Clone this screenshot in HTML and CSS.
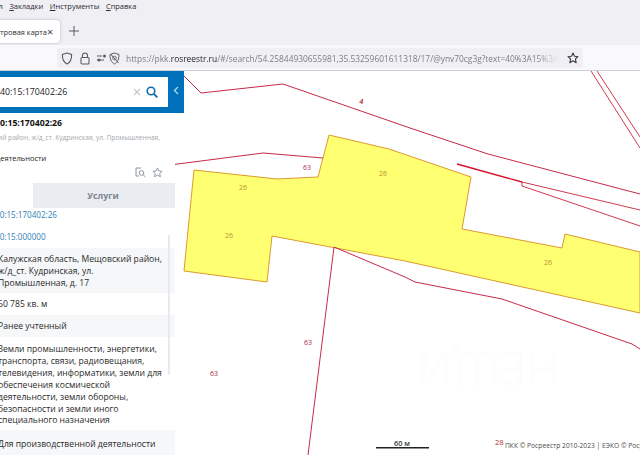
FILE: index.html
```html
<!DOCTYPE html>
<html lang="ru">
<head>
<meta charset="utf-8">
<title>Публичная кадастровая карта</title>
<link rel="stylesheet" href="styles.css">
</head>
<body>
<header class="chrome">
  <nav class="menubar">
    <span class="menu-stub">Журнал</span>
    <span class="menu-item"><u>З</u>акладки</span>
    <span class="menu-item"><u>И</u>нструменты</span>
    <span class="menu-item"><u>С</u>правка</span>
  </nav>
  <div class="tabbar">
    <div class="tab"><span class="tab-title">тровая карта</span><span class="tab-close">×</span></div>
    <svg class="tab-new" width="12" height="12" viewBox="0 0 12 12"><path d="M6 1v10M1 6h10" stroke="#5b5b66" stroke-width="1" fill="none"/></svg>
  </div>
  <div class="toolbar">
    <div class="urlbar">
      <svg class="ic-shield" width="12" height="13" viewBox="0 0 12 13"><path d="M6 1 10.6 2.4C10.8 7 9.6 10 6 12 2.400 10 1.200 7 1.400 2.400Z" fill="none" stroke="#5b5b66" stroke-width="1.100"/></svg>
      <svg class="ic-lock" width="10" height="13" viewBox="0 0 10 13"><path d="M2.500 5.500V3.500a2.500 2.500 0 0 1 5 0v2" fill="none" stroke="#5b5b66" stroke-width="1.100"/><rect x="1" y="5.500" width="8" height="6.500" rx="1" fill="none" stroke="#5b5b66" stroke-width="1.100"/></svg>
      <svg class="ic-perm" width="10" height="8" viewBox="0 0 10 8"><path d="M0 2h5M0 6h7" stroke="#5b5b66" stroke-width="1.200"/><circle cx="7.500" cy="2" r="1.500" fill="#5b5b66"/><circle cx="2" cy="6" r="1.500" fill="#5b5b66"/></svg>
      <svg class="ic-track" width="11" height="13" viewBox="0 0 11 13"><path d="M5.500 1 10 2.500C10 7 9 10 5.500 12 2 10 1 7 1 2.500Z" fill="none" stroke="#5b5b66" stroke-width="1"/><path d="M1.500 2 9.500 11" stroke="#5b5b66" stroke-width="1"/><circle cx="5.500" cy="6" r="1.800" fill="none" stroke="#5b5b66" stroke-width=".8"/></svg>
      <span class="url"><span class="url-dim">https://pkk.</span><span class="url-host">rosreestr.ru</span><span class="url-dim">/#/search/54.25844930655981,35.53259601611318/17/@ynv70cg3g?text=40%3A15%3A170402%3A26</span></span>
      <svg class="ic-star" width="12" height="12" viewBox="0 0 12 12"><path d="M6 1 7.500 4.300 11 4.700 8.400 7 9.200 10.700 6 8.800 2.800 10.700 3.600 7 1 4.700 4.500 4.300Z" fill="none" stroke="#3d3d46" stroke-width="1.100" stroke-linejoin="round"/></svg>
    </div>
  </div>
</header>

<main class="stage">
  <svg class="map" viewBox="0 71 640 384" width="640" height="384">
    <polygon class="parcel" points="194,170 277,179 318,177 329,135 389,149 471,177 462,229 562,248 565,234 640,252 640,313 405,261 272,236 267,282 184,271"/>
    <polyline class="boundary" points="184,76 201,93 283,84 410,128 488,154 640,194"/>
    <polyline class="boundary" points="170,165 263,153 323,158"/>
    <polyline class="boundary thick" points="457,164 522,182"/>
    <polyline class="boundary thin" points="522,182 640,210"/>
    <polyline class="boundary thin" points="522,182 522,186 640,226"/>
    <polyline class="boundary thin" points="591,71 640,148"/>
    <polyline class="boundary thin" points="597,71 640,137"/>
    <polyline class="boundary" points="334,247 308,455"/>
    <polyline class="boundary" points="334,247 405,277 415,282 502,299 632,344 640,349"/>
    <text class="lbl lbl-4" x="0" y="0" transform="translate(361 104) rotate(12)">4</text>
    <text class="lbl lbl-y" x="243" y="190">26</text>
    <text class="lbl lbl-y" x="383" y="176">26</text>
    <text class="lbl lbl-y" x="229" y="238">26</text>
    <text class="lbl lbl-y" x="548" y="265">26</text>
    <text class="lbl lbl-r" x="307" y="170">63</text>
    <text class="lbl lbl-r" x="308" y="345">63</text>
    <text class="lbl lbl-r" x="214" y="376">63</text>
    <text class="ghost" x="0" y="0" transform="translate(560 352) rotate(180)">НЕЩИ</text>
    <rect class="scale-bar" x="376" y="447" width="53" height="1.500"/>
    <text class="scale-text" x="402" y="446">60 м</text>
    <text class="lbl-28" x="495" y="445">28</text>
    <text class="copy" x="505" y="448">ПКК © Росреестр 2010-2023 | ЕЭКО © Росреестр</text>
  </svg>

  <aside class="sidebar">
    <div class="searchbar">
      <div class="searchbox">
        <span class="search-value">40:15:170402:26</span>
        <svg class="search-clear" width="8" height="8" viewBox="0 0 8 8"><path d="M1 1l6 6M7 1 1 7" stroke="#c4c8cc" stroke-width="1.100"/></svg>
        <svg class="search-go" width="12" height="12" viewBox="0 0 12 12"><circle cx="5" cy="5" r="3.800" fill="none" stroke="#0f6fae" stroke-width="1.600"/><path d="M8 8l3.300 3.300" stroke="#0f6fae" stroke-width="1.800"/></svg>
      </div>
      <div class="collapse">
        <svg width="6" height="9" viewBox="0 0 6 9"><path d="M5 1 1.500 4.500 5 8" fill="none" stroke="#a8d4f0" stroke-width="1.400"/></svg>
      </div>
    </div>
    <div class="card">
      <div class="card-title">40:15:170402:26</div>
      <div class="card-addr">ий район, ж/д_ст. Кудринская, ул. Промышленная,</div>
      <div class="card-use">деятельности</div>
      <div class="card-actions">
        <svg width="11" height="11" viewBox="0 0 11 11"><path d="M6 1H1v8h3" fill="none" stroke="#8a949c" stroke-width="1"/><circle cx="6.500" cy="6" r="2.300" fill="none" stroke="#8a949c" stroke-width="1"/><path d="M8.200 7.800 10.500 10" stroke="#8a949c" stroke-width="1"/></svg>
        <svg width="11" height="11" viewBox="0 0 12 12"><path d="M6 1 7.500 4.300 11 4.700 8.400 7 9.200 10.700 6 8.800 2.800 10.700 3.600 7 1 4.700 4.500 4.300Z" fill="none" stroke="#8a949c" stroke-width="1"/></svg>
      </div>
      <div class="tabs">
        <div class="tab-info"></div>
        <div class="tab-services">Услуги</div>
      </div>
    </div>
    <div class="details">
      <div class="row-link row-first">40:15:170402:26</div>
      <div class="row-link row-second">40:15:000000</div>
      <div class="row row-alt row-addr">Калужская область, Мещовский район, ж/д_ст. Кудринская, ул. Промышленная, д. 17</div>
      <div class="row row-area">60 785 кв. м</div>
      <div class="row row-alt row-status">Ранее учтенный</div>
      <div class="row row-cat">Земли промышленности, энергетики, транспорта, связи, радиовещания, телевидения, информатики, земли для обеспечения космической деятельности, земли обороны, безопасности и земли иного специального назначения</div>
      <div class="row row-alt row-use">Для производственной деятельности</div>
      <div class="scrollbar"></div>
    </div>
  </aside>
</main>
</body>
</html>
```
FILE: styles.css
```css
* { box-sizing: border-box; }
html, body { margin: 0; padding: 0; }
body {
  width: 640px;
  height: 455px;
  overflow: hidden;
  background: #fff;
  font-family: "Open Sans", "Noto Sans", sans-serif;
  display: flex;
  flex-direction: column;
}

/* browser chrome */
.chrome { height: 71px; flex: none; background: #f0f0f4; display: flex; flex-direction: column; }
.menubar { height: 18px; display: flex; align-items: flex-start; font-size: 7.500px; line-height: 12px; color: #2b2b33; gap: 6.500px; }
.menu-stub { margin-left: -25px; }
.menu-item { white-space: nowrap; }
.tabbar { height: 27px; display: flex; align-items: flex-start; padding-top: 2px; }
.tab {
  width: 60px; height: 23px; background: #fff; border-radius: 0 4px 4px 0;
  box-shadow: 0 0 3px rgba(0,0,0,.25);
  display: flex; align-items: center; font-size: 7.400px; color: #2b2b33; white-space: nowrap; overflow: hidden;
}
.tab-title { width: 47px; flex: none; }
.tab-close { font-size: 11px; line-height: 1; color: #3d3d46; }
.tab-new { margin: 5px 0 0 8px; }
.toolbar { flex: 1; background: #f9f9fb; border-bottom: 1px solid #cfcfd8; display: flex; padding-top: 3px; padding-bottom: 2px; }
.urlbar {
  margin-left: 57px; width: 526px; background: #f0f0f4; border-radius: 3px;
  display: flex; align-items: center; font-size: 8.400px; position: relative; overflow: hidden;
}
.ic-shield { margin-left: 4px; }
.ic-lock { margin-left: 7px; }
.ic-perm { margin-left: 7px; }
.ic-track { margin-left: 2px; }
.url {
  margin-left: 6px; flex: 1; white-space: nowrap; overflow: hidden;
  -webkit-mask-image: linear-gradient(to right, #000 94%, transparent 99%);
  mask-image: linear-gradient(to right, #000 94%, transparent 99%);
}
.url-dim { color: #7d7d86; }
.url-host { color: #26262e; }
.ic-star { flex: none; margin: 0 4px 0 4px; }

/* map */
.stage { flex: 1; position: relative; overflow: hidden; }
.map { position: absolute; inset: 0; display: block; }
.parcel { fill: #ffff72; stroke: #dc9a2e; stroke-width: 1; }
.boundary { fill: none; stroke: #c72a48; stroke-width: 1; }
.thin { stroke: #c9243c; stroke-width: .9; }
.thick { stroke: #d4122c; stroke-width: 1.400; }
.lbl { font-family: "Open Sans", sans-serif; font-size: 7px; text-anchor: middle; }
.lbl-y { fill: #b89232; }
.lbl-r { fill: #a82c44; }
.lbl-4 { fill: #b82440; font-weight: 600; }
.lbl-28 { font-family: "Open Sans", sans-serif; font-size: 7.500px; fill: #b03030; }
.ghost { font-family: "Open Sans", sans-serif; font-size: 46px; fill: #fdfdfd; }
.scale-bar { fill: #222; }
.scale-text { font-family: "Open Sans", sans-serif; font-size: 7.200px; font-weight: 600; fill: #333; text-anchor: middle; }
.copy { font-family: "Open Sans", sans-serif; font-size: 6.700px; fill: #4b4b4b; }

/* side panel */
.sidebar { position: relative; width: 184px; height: 100%; display: flex; flex-direction: column; overflow: hidden; }
.searchbar { height: 42px; flex: none; background: #0070ba; display: flex; padding-top: 6px; }
.searchbox { width: 168px; height: 30px; background: #fff; display: flex; align-items: center; padding-right: 10px; }
.search-value { flex: 1; font-size: 8.800px; color: #222; }
.search-clear { margin-right: 5px; }
.search-go { flex: none; }
.collapse { flex: 1; display: flex; align-items: center; justify-content: center; padding-bottom: 10px; }
.card { width: 175px; height: 95px; flex: none; background: #fff; padding-top: 4px; position: relative; overflow: hidden; }
.card-title { margin-left: -5px; font-size: 8.700px; font-weight: 700; color: #111; line-height: 13px; }
.card-addr { margin: 2px 0 0 -2px; font-size: 6.600px; color: #a4a8ac; line-height: 11px; white-space: nowrap; overflow: hidden; }
.card-use { margin: 9px 0 0 -4px; font-size: 7.500px; color: #222; line-height: 12px; }
.card-actions { display: flex; justify-content: flex-end; gap: 6px; padding-right: 12px; margin-top: 3px; height: 16px; }
.tabs { display: flex; height: 25px; }
.tab-info { width: 33px; background: #fff; }
.tab-services { flex: 1; background: #e9edf2; color: #7c858d; font-size: 8.800px; font-weight: 700; display: flex; align-items: center; justify-content: center; padding-right: 2px; }
.details { width: 175px; flex: 1; background: #fff; position: relative; font-size: 8.600px; line-height: 11.900px; color: #2a2a2a; overflow: hidden; }
.row { margin-left: -2px; padding-right: 12px; }
.row-link { color: #2d80b4; font-size: 8.100px; margin-left: -5px; line-height: 12px; }
.row-first { padding-top: 1px; height: 23px; }
.row-second { height: 17px; }
.row-alt { background: #f6f7f9; }
.row-addr { height: 45px; padding-top: 6px; }
.row-area { height: 22px; padding-top: 6px; }
.row-status { height: 22px; padding-top: 6px; }
.row-cat { height: 93px; padding-top: 7px; }
.row-use { height: 30px; padding-top: 9px; }
.scrollbar { position: absolute; left: 168px; top: 27px; width: 2px; height: 140px; background: #e8eaed; }
```
